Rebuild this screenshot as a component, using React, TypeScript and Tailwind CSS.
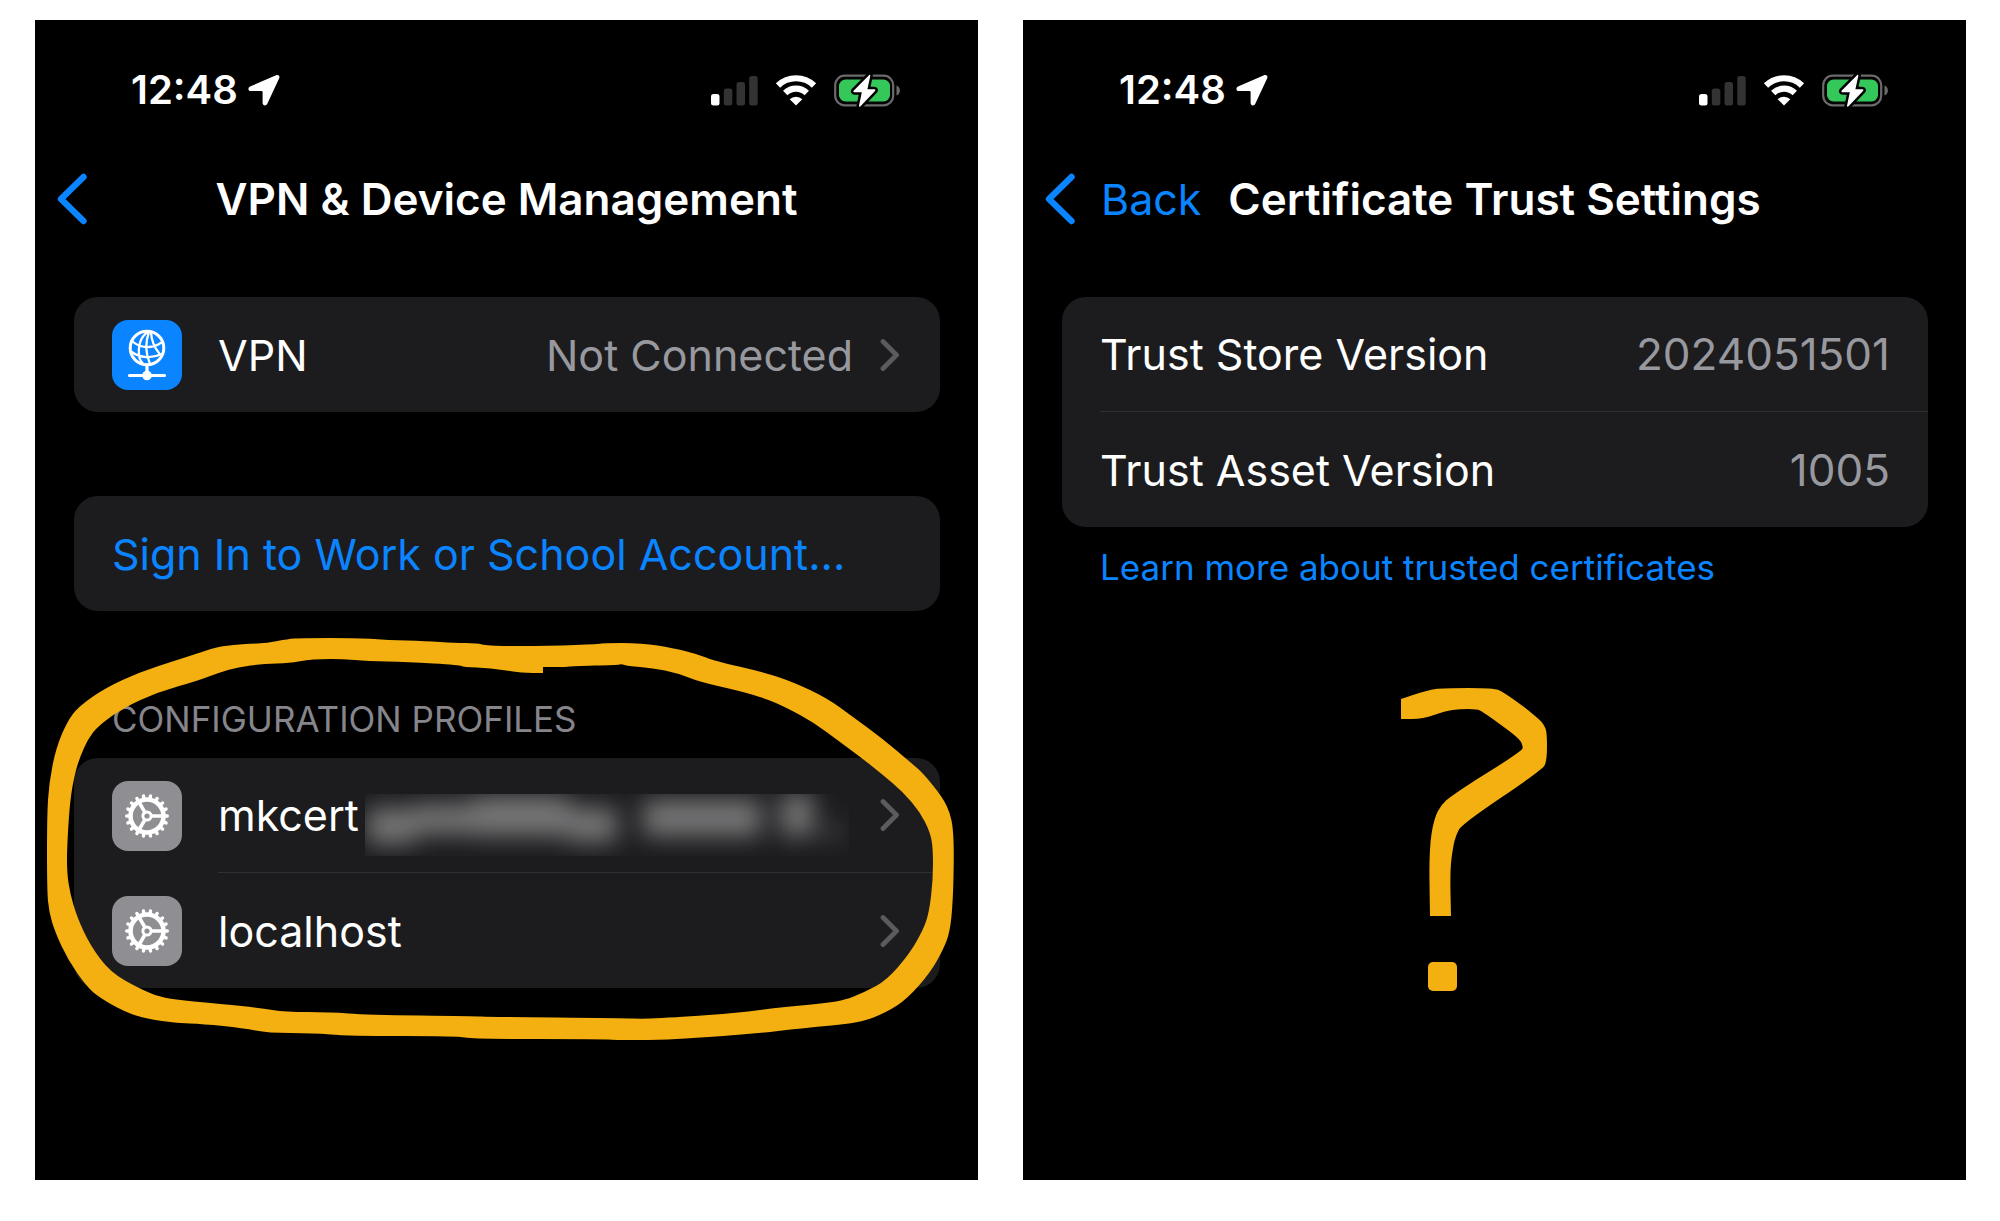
import type { ReactNode } from 'react';

const MARKER = '#f4af10';

// Rounds a hand-drawn outline by curving through the midpoints.
// A point that is listed twice stays a hard corner.
function smooth(outline: string) {
  const n = outline.trim().split(/\s+/).map(Number);
  const pts = Array.from({ length: n.length / 2 }, (_, i) => [n[i * 2], n[i * 2 + 1]]);
  const mid = (a: number[], b: number[]) => `${(a[0] + b[0]) / 2} ${(a[1] + b[1]) / 2}`;
  const curves = pts.map((p, i) => `Q${p[0]} ${p[1]} ${mid(p, pts[(i + 1) % pts.length])}`);
  return `M${mid(pts[pts.length - 1], pts[0])}${curves.join('')}Z`;
}

const ringOuter =
  '12 797 14 763 21 728 32 702 43 687 70 668 105 652 142 640 167 632 185 626 212 624 232 623 253 619 265 618 325 618 353 620 390 621 420 623 442 623 452 626 515 626 565 624 567 623 607 623 638 628 662 634 680 641 728 652 758 662 792 678 818 697 848 719 875 742 888 753 908 778 915 793 918 808 919 833 918 880 915 912 908 930 895 953 872 979 852 992 825 1003 768 1008 718 1014 658 1018 625 1020 578 1020 568 1019 438 1019 422 1016 313 1016 278 1013 233 1013 208 1008 168 1004 142 1003 112 999 90 992 65 978 52 967 33 940 20 912 14 892 12 870';
const ringInner =
  '32 827 35 780 40 753 45 737 53 719 63 706 88 688 123 672 162 661 183 653 203 647 228 644 255 643 272 640 285 639 307 639 333 641 372 642 425 645 428 647 455 648 487 653 508 653 508 653 508 647 508 647 532 647 537 646 582 645 587 644 592 646 618 648 642 653 665 662 705 671 732 679 752 688 778 702 805 722 828 739 848 755 868 772 885 792 895 812 898 828 898 860 894 893 888 910 875 933 852 960 830 972 805 982 748 987 702 993 645 997 608 999 588 998 455 997 438 996 332 995 295 992 250 992 225 988 188 984 130 979 105 969 75 952 55 925 42 897 35 873 32 853';
const hook =
  '378 679 378 679 405 670 420 668 471 668 480 672 500 686 517 700 521 705 524 712 524 741 519 750 439 804 433 815 430 827 427 850 428 896 428 896 407 896 407 896 406 830 411 798 419 784 427 777 454 759 477 745 499 730 500 727 497 719 474 702 460 692 454 689 437 689 422 691 400 699 378 699 378 699';

const LocationArrow = () => (
  <svg width="32" height="32" viewBox="0 0 32 32" fill="#fff" aria-hidden="true">
    <path d="M28 1.200 2 12.600C-.3 13.700 0 17 2.600 17h10.800c.8 0 1.200.4 1.200 1.200V29c0 2.800 3.600 3.200 4.700.8L31.200 4.200C32.200 2 30.200.2 28 1.200Z" />
  </svg>
);

const Signal = () => (
  <svg width="47" height="31" viewBox="0 0 47 31" aria-hidden="true">
    <rect x="0" y="19" width="8.500" height="11.500" rx="2.500" fill="#fff" />
    <rect x="12.800" y="13.500" width="8.500" height="17" rx="2.500" fill="#333" />
    <rect x="25.500" y="7" width="8.500" height="23.500" rx="2.500" fill="#333" />
    <rect x="38.200" y="1" width="8.500" height="29.500" rx="2.500" fill="#333" />
  </svg>
);

const Wifi = () => (
  <svg width="42" height="31" viewBox="0 0 42 31" aria-hidden="true">
    <path d="M3 10.500a26 26 0 0 1 36 0M10.200 18a15.500 15.500 0 0 1 21.600 0" fill="none" stroke="#fff" strokeWidth="6.200" />
    <path d="M21 30.500 14.700 24.200a9 9 0 0 1 12.600 0Z" fill="#fff" />
  </svg>
);

const Battery = () => (
  <svg width="67" height="33" viewBox="0 0 67 33" aria-hidden="true">
    <rect x="1.200" y="1.700" width="58" height="29.600" rx="9.500" fill="none" stroke="#6b6b6b" strokeWidth="2.200" />
    <path d="M62.500 11.500c4.500 1.500 4.500 8.500 0 10Z" fill="#6b6b6b" />
    <rect x="5" y="5.500" width="51" height="22" rx="6.500" fill="#34c759" />
    <path
      d="M35 1.200 19.800 16.500c-.8.9-.4 1.700.8 1.700h7.200L25 31.800c-.2 1 .8 1.300 1.500.5L41 17c.8-.9.400-1.800-.8-1.800h-6.800l2.900-13.300c.2-1-.6-1.500-1.300-.7Z"
      fill="#fff"
      stroke="#000"
      strokeWidth="5"
      paintOrder="stroke"
    />
  </svg>
);

const BackChevron = () => (
  <svg width="30" height="52" viewBox="0 0 30 52" fill="none" stroke="#0a84ff" strokeWidth="6.400" strokeLinecap="round" strokeLinejoin="round" aria-hidden="true">
    <path d="M26.500 4 4 26l22.500 22" />
  </svg>
);

const RowChevron = () => (
  <svg width="20" height="34" viewBox="0 0 20 34" fill="none" stroke="#5b5b5f" strokeWidth="4.800" strokeLinecap="round" strokeLinejoin="round" aria-hidden="true">
    <path d="M3 3.500 16.500 17 3 30.500" />
  </svg>
);

const GlobeIcon = () => (
  <svg width="70" height="70" viewBox="0 0 70 70" fill="none" stroke="#fff" strokeLinecap="round" aria-hidden="true">
    <circle cx="35" cy="28" r="16.800" strokeWidth="3" />
    <path d="M36 12c-6 3.500-11 12-8.500 26 .5 1.500 1.500 3.500 3 5M37 12c-3.500 9-4 20 1 32M39 12c.5 9 3 15 8 21M20 21c8 7.500 20 8 29.500 1.500M19 31.500c9 6.500 21 7.500 30.500 2.500" strokeWidth="2.300" />
    <path d="M35 45v10M17.500 55.500h35" strokeWidth="3.200" />
    <circle cx="35" cy="55.500" r="4.800" fill="#fff" stroke="none" />
  </svg>
);

const teeth = Array.from({ length: 18 }, (_, i) => i * 20);

const GearIcon = () => (
  <svg width="70" height="70" viewBox="-35 -35 70 70" fill="none" stroke="#fff" aria-hidden="true">
    {teeth.map((a) => (
      <path key={a} d="M17 0H20.300" strokeWidth="3.400" strokeLinecap="round" transform={`rotate(${a})`} />
    ))}
    <circle r="16.500" strokeWidth="4.600" />
    <circle r="4.100" strokeWidth="3" />
    <path d="M5 0H15M-2.500 4.300-7.500 13M-2.500-4.300-7.500-13" strokeWidth="3.600" />
  </svg>
);

// Profile owner, smudged out
const Redacted = () => (
  <svg className="mt-[20px]" width="484" height="62" viewBox="0 0 484 62" fill="#fff" aria-hidden="true">
    <defs>
      <filter id="smudge" x="-20%" y="-60%" width="140%" height="220%">
        <feGaussianBlur stdDeviation="12" />
      </filter>
    </defs>
    <g filter="url(#smudge)" fillOpacity="0.4">
      <rect x="2" y="14" width="48" height="36" />
      <rect x="50" y="10" width="58" height="30" />
      <rect x="108" y="2" width="96" height="40" />
      <rect x="204" y="14" width="48" height="34" />
      <rect x="278" y="6" width="118" height="36" />
      <rect x="416" y="0" width="32" height="42" />
      <rect x="456" y="34" width="22" height="6" />
    </g>
  </svg>
);

function StatusBar() {
  return (
    <div className="mt-[45px] flex h-[50px] items-center justify-between pr-[77px] pl-[96px]">
      <div className="flex items-center gap-[10px]">
        <time className="text-[40px] leading-[50px] font-semibold">12:48</time>
        <LocationArrow />
      </div>
      <div className="flex items-center gap-[17px]">
        <Signal />
        <Wifi />
        <Battery />
      </div>
    </div>
  );
}

function Screen({ title, back, children }: { title: string; back?: string; children: ReactNode }) {
  return (
    <section className="relative flex flex-col bg-black text-white">
      <StatusBar />
      <header className="mt-[44px] grid h-[80px] grid-cols-[1fr_auto_1fr] items-center">
        <button type="button" aria-label="Back" className="flex items-center gap-[26px] pl-[22px] text-[43px] leading-[56px] text-[#0a84ff]">
          <BackChevron />
          {back}
        </button>
        <h1 className="text-[44px] leading-[56px] font-semibold whitespace-nowrap">{title}</h1>
      </header>
      <div className="pt-[58px] pr-[38px] pl-[39px]">{children}</div>
    </section>
  );
}

function Card({ children, className = '' }: { children: ReactNode; className?: string }) {
  return <div className={`overflow-hidden rounded-[24px] bg-[#1c1c1e] text-[43px] leading-[56px] ${className}`}>{children}</div>;
}

function LinkRow({ icon, tint, label, value, divider }: { icon: ReactNode; tint: string; label: ReactNode; value?: string; divider?: boolean }) {
  return (
    <button type="button" className="flex w-full items-center gap-[36px] pl-[38px] text-left">
      <span className={`size-[70px] shrink-0 overflow-hidden rounded-[16px] ${tint}`}>{icon}</span>
      <span className={`flex h-[115px] flex-1 items-center pr-[40px] ${divider ? 'border-b border-[#303033]' : ''}`}>
        <span className="flex flex-1 items-center gap-[6px]">{label}</span>
        {value && <span className="mr-[27px] text-[#98989f]">{value}</span>}
        <RowChevron />
      </span>
    </button>
  );
}

function VersionRow({ label, value, divider }: { label: string; value: string; divider?: boolean }) {
  return (
    <div className="pl-[38px]">
      <div className={`flex h-[115px] items-center justify-between pr-[38px] ${divider ? 'border-b border-[#303033]' : ''}`}>
        <dt>{label}</dt>
        <dd className="text-[44px] text-[#98989f]">{value}</dd>
      </div>
    </div>
  );
}

export default function App() {
  return (
    <main className="grid min-h-screen grid-cols-2 gap-[45px] bg-white pt-[20px] pr-[34px] pb-[41px] pl-[35px] font-['Inter',sans-serif]">
      <Screen title="VPN & Device Management">
        <Card>
          <LinkRow icon={<GlobeIcon />} tint="bg-[#0a84ff]" label="VPN" value="Not Connected" />
        </Card>
        <Card className="mt-[84px]">
          <button type="button" className="flex h-[115px] w-full items-center pl-[38px] text-[#0a84ff]">
            Sign In to Work or School Account...
          </button>
        </Card>
        <h2 className="mt-[84px] mb-[15px] pl-[38px] text-[35px] leading-[48px] text-[#85858b]">CONFIGURATION PROFILES</h2>
        <Card>
          <LinkRow icon={<GearIcon />} tint="bg-[#8e8e93]" label={<>mkcert <Redacted /></>} divider />
          <LinkRow icon={<GearIcon />} tint="bg-[#8e8e93]" label="localhost" />
        </Card>
        {/* marker ring round the profiles */}
        <svg viewBox="0 0 943 1160" className="pointer-events-none absolute inset-x-0 top-0 w-full" fill={MARKER} fillRule="evenodd" aria-hidden="true">
          <path d={smooth(ringOuter) + smooth(ringInner)} />
        </svg>
      </Screen>

      <Screen title="Certificate Trust Settings" back="Back">
        <Card>
          <dl>
            <VersionRow label="Trust Store Version" value="2024051501" divider />
            <VersionRow label="Trust Asset Version" value="1005" />
          </dl>
        </Card>
        <a href="#" className="mt-[16px] block pl-[38px] text-[35px] leading-[48px] text-[#0a84ff]">
          Learn more about trusted certificates
        </a>
        {/* marker question mark on the empty half */}
        <svg viewBox="0 0 943 1160" className="pointer-events-none absolute inset-x-0 top-0 w-full" fill={MARKER} aria-hidden="true">
          <path d={smooth(hook)} />
          <rect x="405" y="942" width="29" height="29" rx="5" />
        </svg>
      </Screen>
    </main>
  );
}
